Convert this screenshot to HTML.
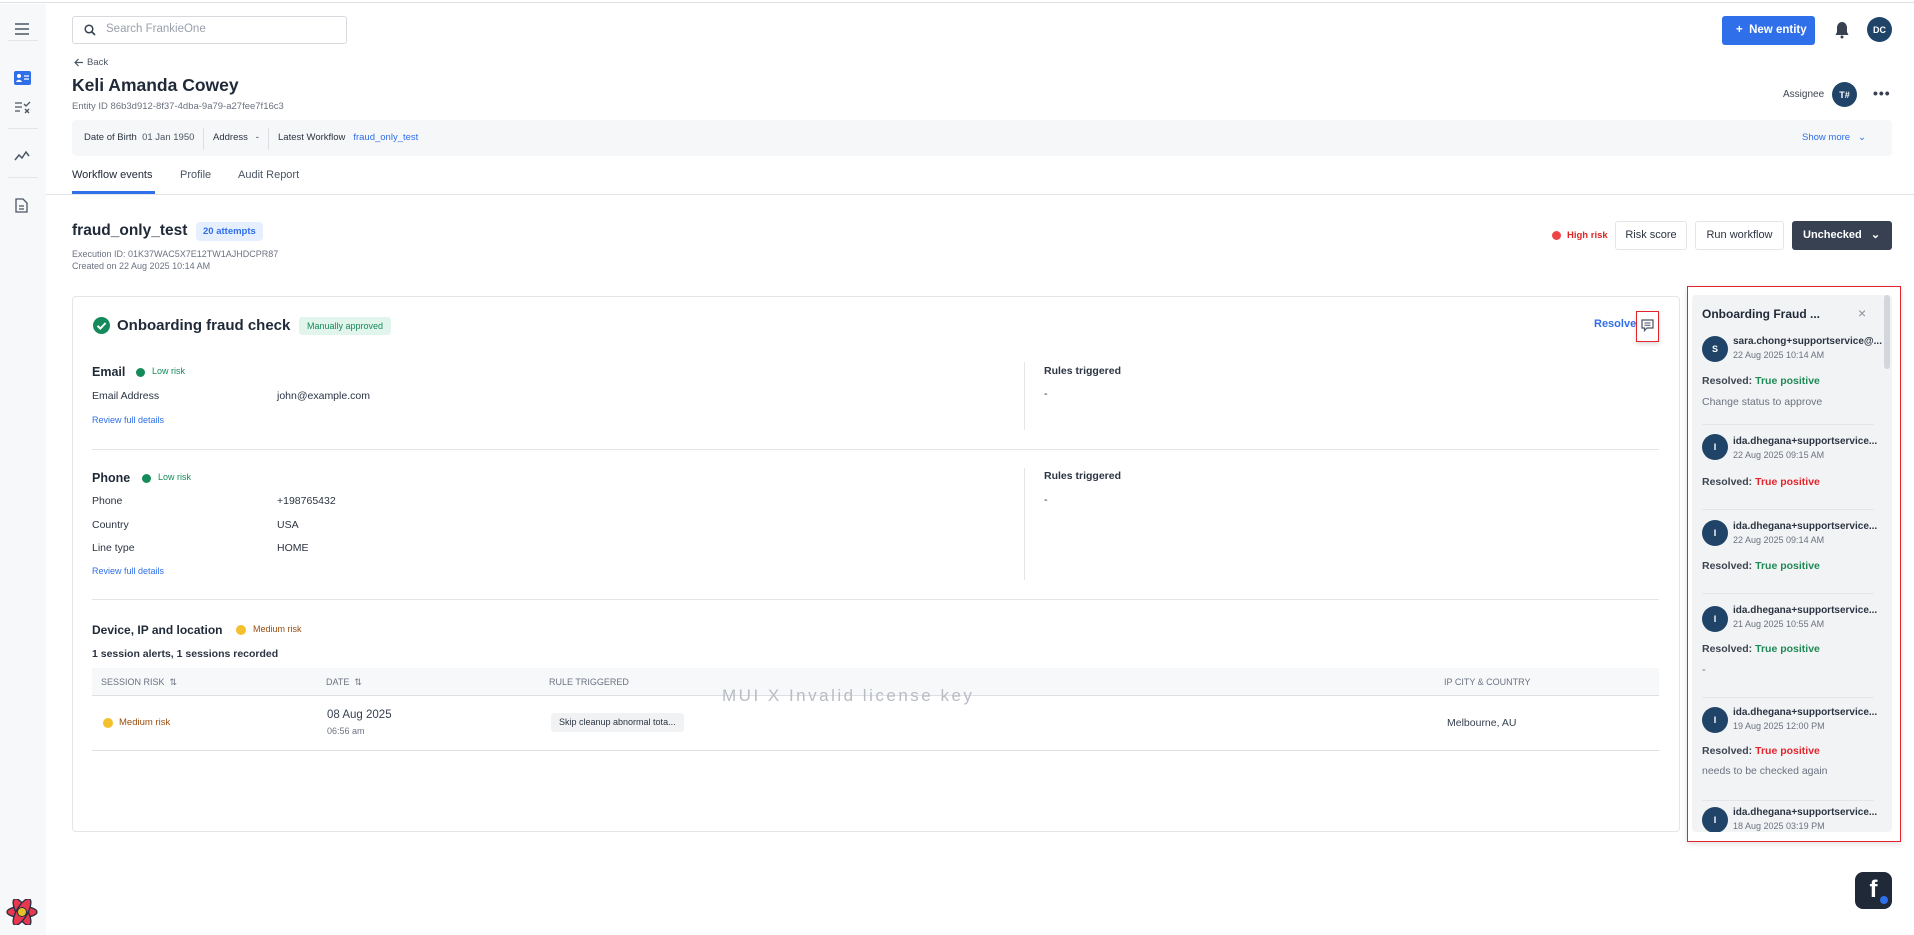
<!DOCTYPE html>
<html><head><meta charset="utf-8"><style>
*{box-sizing:border-box;margin:0;padding:0}
body{width:1914px;height:935px;position:relative;overflow:hidden;background:#fff;font-family:"Liberation Sans",sans-serif;color:#2b3442;font-size:11px}
.a{position:absolute;white-space:nowrap}
.lbl{color:#2b3442;font-size:10.5px}
.blue{color:#2f6fea}
.dot{position:absolute;border-radius:50%}
.hl{position:absolute;height:1px;background:#e3e5e8}
.av{position:absolute;width:26px;height:26px;border-radius:50%;background:#1f4468;color:#fff;font-size:9px;font-weight:bold;display:flex;align-items:center;justify-content:center}
.pn{font-size:10px;font-weight:bold;color:#2b3442}
.pd{font-size:9px;color:#6b7280}
.res{font-size:10.5px;font-weight:bold;color:#3d4551}
.g{color:#1e8a55}.r{color:#e3242b}
</style></head><body>
<div class="hl" style="top:2px;left:0;width:1914px;background:#dcdfe3"></div>
<!-- sidebar -->
<div class="a" style="left:0;top:4px;width:46px;height:931px;background:#f7f8fa"></div>
<svg class="a" style="left:14px;top:23px" width="16" height="12"><path d="M1 1h14M1 6h14M1 11h14" stroke="#4b5563" stroke-width="1.5"/></svg>
<div class="hl" style="top:40px;left:8px;width:30px"></div>
<svg class="a" style="left:14px;top:71px" width="17" height="14"><rect width="17" height="14" rx="2" fill="#2f6fea"/><circle cx="5" cy="5" r="2" fill="#fff"/><path d="M2 11c1-3 5-3 6 0z" fill="#fff"/><path d="M10 5h5M10 8h5" stroke="#fff" stroke-width="1.3"/></svg>
<svg class="a" style="left:14px;top:101px" width="17" height="13"><path d="M1 2h7M1 6h7M1 10h5M10 3l2 2 4-4M11 8l4 4M15 8l-4 4" stroke="#4b5563" stroke-width="1.3" fill="none"/></svg>
<div class="hl" style="top:128px;left:8px;width:30px"></div>
<svg class="a" style="left:14px;top:150px" width="16" height="12"><path d="M1 10l4-5 3 3 4-6 3 4" stroke="#4b5563" stroke-width="1.5" fill="none"/></svg>
<div class="hl" style="top:177px;left:8px;width:30px"></div>
<svg class="a" style="left:15px;top:198px" width="13" height="15"><path d="M1 1h7l4 4v9H1z" stroke="#4b5563" stroke-width="1.3" fill="none"/><path d="M4 8h5M4 11h5" stroke="#4b5563" stroke-width="1.2"/></svg>
<svg class="a" style="left:6px;top:899px" width="32" height="26" viewBox="0 0 32 26"><g fill="#e8384f" stroke="#1f2f44" stroke-width="1.3"><ellipse cx="16" cy="13" rx="15" ry="5.5"/><ellipse cx="16" cy="13" rx="15" ry="5.5" transform="rotate(60 16 13)"/><ellipse cx="16" cy="13" rx="15" ry="5.5" transform="rotate(-60 16 13)"/></g><circle cx="16" cy="13" r="4.5" fill="#e6c229" stroke="#1f2f44"/></svg>
<!-- top bar -->
<div class="a" style="left:72px;top:16px;width:275px;height:28px;border:1px solid #d6d9de;border-radius:3px"></div>
<svg class="a" style="left:84px;top:24px" width="12" height="12"><circle cx="5" cy="5" r="3.8" stroke="#374151" stroke-width="1.5" fill="none"/><path d="M8 8l3 3" stroke="#374151" stroke-width="1.6"/></svg>
<div class="a" style="left:106px;top:23px;font-size:11.5px;color:#9aa1ab">Search FrankieOne</div>
<div class="a" style="left:1722px;top:16px;width:93px;height:29px;background:#2f6fea;border-radius:3px;color:#fff;font-size:11.5px;font-weight:bold;line-height:29px;padding-left:14px">+&nbsp; New entity</div>
<svg class="a" style="left:1835px;top:21px" width="14" height="18"><path d="M7 1c3 0 5 2.5 5 6v4l1.5 3h-13L2 11V7c0-3.5 2-6 5-6z" fill="#374151"/><circle cx="7" cy="16" r="1.5" fill="#374151"/></svg>
<div class="av" style="left:1867px;top:17px;width:25px;height:25px;font-size:9px">DC</div>
<!-- header -->
<svg class="a" style="left:74px;top:58px" width="10" height="9"><path d="M9 4.5H1M4.5 1L1 4.5 4.5 8" stroke="#4b5563" stroke-width="1.2" fill="none"/></svg>
<div class="a" style="left:87px;top:57px;font-size:9.5px;color:#4b5563">Back</div>
<div class="a" style="left:72px;top:75px;font-size:17.5px;font-weight:bold;color:#1f2937">Keli Amanda Cowey</div>
<div class="a" style="left:72px;top:101px;font-size:9.5px;color:#6b7280">Entity ID 86b3d912-8f37-4dba-9a79-a27fee7f16c3</div>
<div class="a" style="left:1783px;top:89px;font-size:10px;color:#3d4551">Assignee</div>
<div class="av" style="left:1832px;top:82px;width:25px;height:25px">T#</div>
<div class="a" style="left:1873px;top:85px;font-size:14px;font-weight:bold;color:#374151;letter-spacing:1px">•••</div>
<div class="a" style="left:72px;top:120px;width:1820px;height:36px;background:#f6f7f9;border-radius:4px"></div>
<div class="a" style="left:84px;top:132px;font-size:9.5px;color:#2b3442">Date of Birth&nbsp; <span style="color:#4b5563">01 Jan 1950</span></div>
<div class="a" style="left:203px;top:128px;width:1px;height:22px;background:#dcdfe3"></div>
<div class="a" style="left:213px;top:132px;font-size:9.5px">Address&nbsp;&nbsp; -</div>
<div class="a" style="left:268px;top:128px;width:1px;height:22px;background:#dcdfe3"></div>
<div class="a" style="left:278px;top:132px;font-size:9.5px">Latest Workflow&nbsp;&nbsp; <span class="blue">fraud_only_test</span></div>
<div class="a blue" style="left:1802px;top:132px;font-size:9.5px">Show more &nbsp;&nbsp;⌄</div>
<div class="a" style="left:72px;top:169px;font-size:11px;color:#1f2937">Workflow events</div>
<div class="a" style="left:180px;top:169px;font-size:11px;color:#4b5563">Profile</div>
<div class="a" style="left:238px;top:169px;font-size:11px;color:#4b5563">Audit Report</div>
<div class="hl" style="top:194px;left:46px;width:1868px"></div>
<div class="a" style="left:72px;top:191px;width:83px;height:3px;background:#2f6fea"></div>
<!-- workflow header -->
<div class="a" style="left:72px;top:222px;font-size:15.5px;font-weight:bold;color:#1f2937">fraud_only_test</div>
<div class="a" style="left:196px;top:222px;height:19px;padding:0 7px;background:#e6effd;border-radius:4px;line-height:19px;font-size:9.5px;color:#2f6fea;font-weight:bold">20 attempts</div>
<div class="a" style="left:72px;top:249px;font-size:9px;color:#6b7280">Execution ID: 01K37WAC5X7E12TW1AJHDCPR87</div>
<div class="a" style="left:72px;top:261px;font-size:9px;color:#6b7280">Created on 22 Aug 2025 10:14 AM</div>
<div class="dot" style="left:1552px;top:231px;width:9px;height:9px;background:#ef4444"></div>
<div class="a" style="left:1567px;top:230px;font-size:9.5px;color:#dc2626;font-weight:bold">High risk</div>
<div class="a" style="left:1615px;top:221px;width:72px;height:29px;border:1px solid #e3e5e8;border-radius:3px;text-align:center;line-height:27px;font-size:11px">Risk score</div>
<div class="a" style="left:1695px;top:221px;width:89px;height:29px;border:1px solid #e3e5e8;border-radius:3px;text-align:center;line-height:27px;font-size:11px">Run workflow</div>
<div class="a" style="left:1792px;top:221px;width:100px;height:29px;background:#374151;border-radius:3px;color:#fff;line-height:29px;font-size:11px;font-weight:bold;padding-left:11px">Unchecked&nbsp;&nbsp;&nbsp;⌄</div>
<!-- main card -->
<div class="a" style="left:72px;top:296px;width:1608px;height:536px;border:1px solid #e3e5e8;border-radius:4px"></div>
<svg class="a" style="left:93px;top:317px" width="17" height="17"><circle cx="8.5" cy="8.5" r="8.5" fill="#158a5a"/><path d="M4.5 8.8l2.8 2.8 5.3-5.6" stroke="#fff" stroke-width="2" fill="none"/></svg>
<div class="a" style="left:117px;top:317px;font-size:15px;font-weight:bold;color:#1f2937">Onboarding fraud check</div>
<div class="a" style="left:299px;top:317px;height:18px;padding:0 8px;background:#e1f5ec;border-radius:3px;line-height:18px;font-size:9px;color:#158a5a">Manually approved</div>
<div class="a blue" style="left:1594px;top:318px;font-size:11px;font-weight:bold">Resolve</div>
<div class="a" style="left:1636px;top:311px;width:23px;height:31px;border:1.5px solid #e3242b;box-shadow:0 2px 4px rgba(0,0,0,.15)"></div>
<svg class="a" style="left:1641px;top:319px" width="13" height="13"><path d="M1 1h11v8H6l-2.5 2.5V9H1z" stroke="#4b5563" stroke-width="1.2" fill="none"/><path d="M3.5 4h6M3.5 6.3h6" stroke="#4b5563" stroke-width="1"/></svg>
<!-- email -->
<div class="a" style="left:92px;top:365px;font-size:12.5px;font-weight:bold;color:#1f2937">Email</div>
<div class="dot" style="left:136px;top:368px;width:9px;height:9px;background:#158a5a"></div>
<div class="a" style="left:152px;top:366px;font-size:9px;color:#158a5a">Low risk</div>
<div class="a lbl" style="left:92px;top:390px">Email Address</div>
<div class="a lbl" style="left:277px;top:390px">john@example.com</div>
<div class="a blue" style="left:92px;top:415px;font-size:9px">Review full details</div>
<div class="a" style="left:1024px;top:362px;width:1px;height:68px;background:#e3e5e8"></div>
<div class="a" style="left:1044px;top:365px;font-size:10.5px;font-weight:bold">Rules triggered</div>
<div class="a" style="left:1044px;top:388px;font-size:11px">-</div>
<div class="hl" style="top:449px;left:92px;width:1567px"></div>
<!-- phone -->
<div class="a" style="left:92px;top:471px;font-size:12.5px;font-weight:bold;color:#1f2937">Phone</div>
<div class="dot" style="left:142px;top:474px;width:9px;height:9px;background:#158a5a"></div>
<div class="a" style="left:158px;top:472px;font-size:9px;color:#158a5a">Low risk</div>
<div class="a lbl" style="left:92px;top:495px">Phone</div><div class="a lbl" style="left:277px;top:495px">+198765432</div>
<div class="a lbl" style="left:92px;top:519px">Country</div><div class="a lbl" style="left:277px;top:519px">USA</div>
<div class="a lbl" style="left:92px;top:542px">Line type</div><div class="a lbl" style="left:277px;top:542px">HOME</div>
<div class="a blue" style="left:92px;top:566px;font-size:9px">Review full details</div>
<div class="a" style="left:1024px;top:468px;width:1px;height:112px;background:#e3e5e8"></div>
<div class="a" style="left:1044px;top:470px;font-size:10.5px;font-weight:bold">Rules triggered</div>
<div class="a" style="left:1044px;top:494px;font-size:11px">-</div>
<div class="hl" style="top:599px;left:92px;width:1567px"></div>
<!-- device -->
<div class="a" style="left:92px;top:623px;font-size:12px;font-weight:bold;color:#1f2937">Device, IP and location</div>
<div class="dot" style="left:236px;top:625px;width:10px;height:10px;background:#f5c02e"></div>
<div class="a" style="left:253px;top:624px;font-size:9px;color:#9a4d0e">Medium risk</div>
<div class="a" style="left:92px;top:648px;font-size:10.5px;font-weight:bold;color:#2b3442">1 session alerts, 1 sessions recorded</div>
<div class="a" style="left:92px;top:668px;width:1567px;height:28px;background:#f7f8fa;border-bottom:1px solid #dcdfe3"></div>
<div class="a" style="left:101px;top:677px;font-size:9px;color:#6b7280">SESSION RISK&nbsp; ⇅</div>
<div class="a" style="left:326px;top:677px;font-size:9px;color:#6b7280">DATE&nbsp; ⇅</div>
<div class="a" style="left:549px;top:677px;font-size:9px;color:#6b7280">RULE TRIGGERED</div>
<div class="a" style="left:1444px;top:677px;font-size:9px;color:#6b7280">IP CITY &amp; COUNTRY</div>
<div class="a" style="left:722px;top:686px;font-size:17px;color:#b8bcc2;letter-spacing:2.5px">MUI X Invalid license key</div>
<div class="dot" style="left:103px;top:718px;width:10px;height:10px;background:#f5c02e"></div>
<div class="a" style="left:119px;top:717px;font-size:9.5px;color:#9a4d0e">Medium risk</div>
<div class="a" style="left:327px;top:709px;font-size:11.5px;color:#374151">08 Aug 2025</div>
<div class="a" style="left:327px;top:726px;font-size:9px;color:#6b7280">06:56 am</div>
<div class="a" style="left:551px;top:713px;height:19px;padding:0 8px;background:#f1f2f4;border-radius:3px;line-height:19px;font-size:9px;color:#2b3442">Skip cleanup abnormal tota...</div>
<div class="a" style="left:1447px;top:717px;font-size:10.5px;color:#374151">Melbourne, AU</div>
<div class="hl" style="top:750px;left:92px;width:1567px;background:#dcdfe3"></div>
<!-- side panel -->
<div class="a" style="left:1687px;top:286px;width:214px;height:556px;border:1px solid #e3242b;box-shadow:0 2px 6px rgba(0,0,0,.12)"></div>
<div class="a" style="left:1692px;top:295px;width:200px;height:537px;background:#f2f3f5;border-radius:4px;overflow:hidden">
 <div class="a" style="left:192px;top:0;width:6px;height:74px;background:#d3d6db;border-radius:3px"></div>
 <div class="a" style="left:10px;top:12px;font-size:12px;font-weight:bold;color:#1f2937">Onboarding Fraud ...</div>
 <div class="a" style="left:166px;top:10px;font-size:14px;color:#8a9099">×</div>
 <div class="av" style="left:10px;top:41px">S</div>
 <div class="a pn" style="left:41px;top:41px">sara.chong+supportservice@...</div>
 <div class="a pd" style="left:41px;top:55px">22 Aug 2025 10:14 AM</div>
 <div class="a res" style="left:10px;top:80px">Resolved: <span class="g">True positive</span></div>
 <div class="a" style="left:10px;top:101px;font-size:10.5px;color:#6b7280">Change status to approve</div>
 <div class="hl" style="left:10px;top:129px;width:172px"></div>
 <div class="av" style="left:10px;top:139px">I</div>
 <div class="a pn" style="left:41px;top:141px">ida.dhegana+supportservice...</div>
 <div class="a pd" style="left:41px;top:155px">22 Aug 2025 09:15 AM</div>
 <div class="a res" style="left:10px;top:181px">Resolved: <span class="r">True positive</span></div>
 <div class="hl" style="left:10px;top:214px;width:172px"></div>
 <div class="av" style="left:10px;top:225px">I</div>
 <div class="a pn" style="left:41px;top:226px">ida.dhegana+supportservice...</div>
 <div class="a pd" style="left:41px;top:240px">22 Aug 2025 09:14 AM</div>
 <div class="a res" style="left:10px;top:265px">Resolved: <span class="g">True positive</span></div>
 <div class="hl" style="left:10px;top:298px;width:172px"></div>
 <div class="av" style="left:10px;top:311px">I</div>
 <div class="a pn" style="left:41px;top:310px">ida.dhegana+supportservice...</div>
 <div class="a pd" style="left:41px;top:324px">21 Aug 2025 10:55 AM</div>
 <div class="a res" style="left:10px;top:348px">Resolved: <span class="g">True positive</span></div>
 <div class="a" style="left:10px;top:369px;font-size:11px;color:#6b7280">-</div>
 <div class="hl" style="left:10px;top:402px;width:172px"></div>
 <div class="av" style="left:10px;top:412px">I</div>
 <div class="a pn" style="left:41px;top:412px">ida.dhegana+supportservice...</div>
 <div class="a pd" style="left:41px;top:426px">19 Aug 2025 12:00 PM</div>
 <div class="a res" style="left:10px;top:450px">Resolved: <span class="r">True positive</span></div>
 <div class="a" style="left:10px;top:470px;font-size:10.5px;color:#6b7280">needs to be checked again</div>
 <div class="hl" style="left:10px;top:505px;width:172px"></div>
 <div class="av" style="left:10px;top:512px">I</div>
 <div class="a pn" style="left:41px;top:512px">ida.dhegana+supportservice...</div>
 <div class="a pd" style="left:41px;top:526px">18 Aug 2025 03:19 PM</div>
</div>
<!-- FAB -->
<div class="a" style="left:1855px;top:872px;width:37px;height:37px;background:#1f2937;border-radius:8px;color:#fff;font-size:24px;font-weight:bold;text-align:center;line-height:36px">f</div>
<div class="dot" style="left:1880px;top:896px;width:8px;height:8px;background:#2f6fea"></div>
</body></html>
